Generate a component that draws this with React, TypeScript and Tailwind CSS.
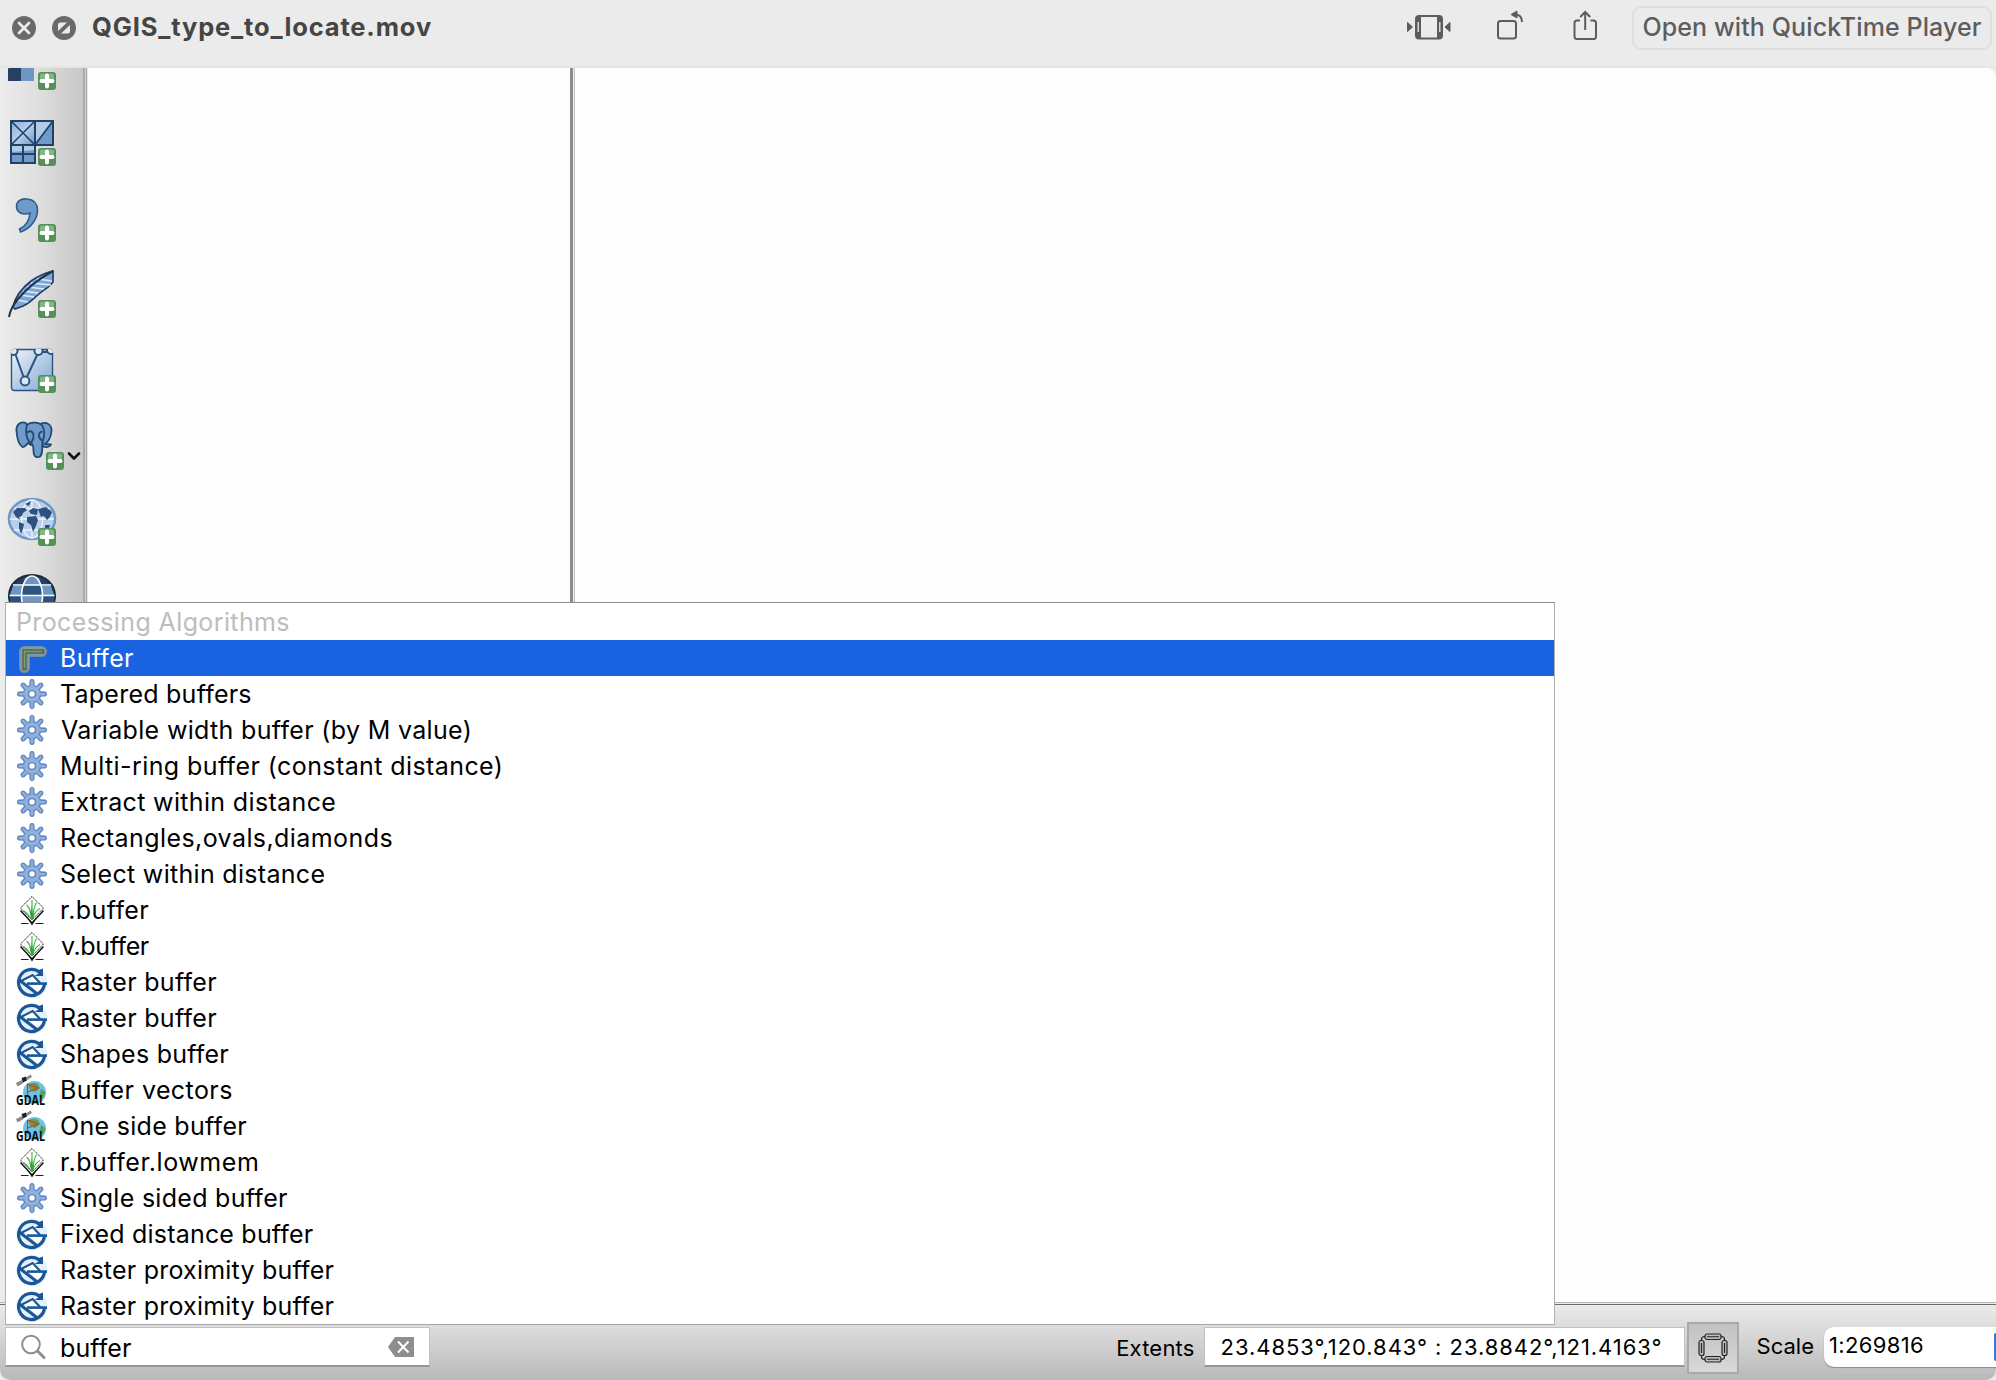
import type { ReactNode } from 'react';

type IconName = 'buffer' | 'gear' | 'grass' | 'saga' | 'gdal';

const results: { icon: IconName; label: string; text: string }[] = [
  { icon: 'buffer', label: 'Buffer', text: 'tracking-[0.3px]' },
  { icon: 'gear', label: 'Tapered buffers', text: 'tracking-[0.24px]' },
  { icon: 'gear', label: 'Variable width buffer (by M value)', text: 'tracking-[0.335px] ml-px' },
  { icon: 'gear', label: 'Multi-ring buffer (constant distance)', text: 'tracking-[0.41px]' },
  { icon: 'gear', label: 'Extract within distance', text: 'tracking-[0.35px]' },
  { icon: 'gear', label: 'Rectangles,ovals,diamonds', text: 'tracking-[0.42px]' },
  { icon: 'gear', label: 'Select within distance', text: 'tracking-[0.304px]' },
  { icon: 'grass', label: 'r.buffer', text: 'tracking-[0.4px]' },
  { icon: 'grass', label: 'v.buffer', text: 'tracking-[-0.4px] ml-px' },
  { icon: 'saga', label: 'Raster buffer', text: 'tracking-[0.3px]' },
  { icon: 'saga', label: 'Raster buffer', text: 'tracking-[0.3px]' },
  { icon: 'saga', label: 'Shapes buffer', text: 'tracking-[0.239px]' },
  { icon: 'gdal', label: 'Buffer vectors', text: 'tracking-[0.42px]' },
  { icon: 'gdal', label: 'One side buffer', text: 'tracking-[0.299px]' },
  { icon: 'grass', label: 'r.buffer.lowmem', text: 'tracking-[0.56px]' },
  { icon: 'gear', label: 'Single sided buffer', text: 'tracking-[0.289px]' },
  { icon: 'saga', label: 'Fixed distance buffer', text: 'tracking-[0.2px]' },
  { icon: 'saga', label: 'Raster proximity buffer', text: 'tracking-[0.22px]' },
  { icon: 'saga', label: 'Raster proximity buffer', text: 'tracking-[0.22px]' },
];

function BufferIcon() {
  return (
    <g fill="none" strokeLinejoin="round" strokeLinecap="round">
      <path d="M10.5 27.5V11.5H27.5" stroke="#6f8f9f" strokeWidth="11" />
      <path d="M10.5 27.5V11.5H27.5" stroke="#8496a0" strokeWidth="9" />
      <path d="M10.5 28V11.5H28" stroke="#4c6b52" strokeWidth="4.4" strokeLinejoin="miter" strokeLinecap="square" />
      <path d="M10.5 28V11.5H28" stroke="#7d9f78" strokeWidth="1.6" strokeLinejoin="miter" strokeLinecap="butt" />
    </g>
  );
}

function GearIcon() {
  const angles = [0, 45, 90, 135, 180, 225, 270, 315];
  return (
    <g>
      {angles.map((a) => (
        <path
          key={a}
          d="M16 10L16.2 5Q16.3 3.600 18 3.600Q19.700 3.600 19.800 5L20 10Z"
          transform={`rotate(${a} 18 18)`}
          fill="#8fb0dc"
          stroke="#5d85bd"
          strokeWidth="1.4"
        />
      ))}
      <circle cx="18" cy="18" r="8.6" fill="#8fb0dc" stroke="#5d85bd" strokeWidth="1.2" />
      {angles.map((a) => (
        <rect key={a} x="16.8" y="7" width="2.4" height="4" transform={`rotate(${a} 18 18)`} fill="#8fb0dc" />
      ))}
      <circle cx="18" cy="18" r="3.4" fill="#fff" stroke="#5d85bd" strokeWidth="1.4" />
    </g>
  );
}

function GrassIcon() {
  return (
    <g>
      <path d="M18 4.5L29.5 16L18 28L6.5 16Z" fill="#fff" stroke="#222" strokeWidth="1" strokeDasharray="1.6 0.7" />
      <path d="M6.5 18.5L18 31L29.5 18.5" fill="none" stroke="#111" strokeWidth="1.5" />
      <path d="M13.5 26.5L18 31L22.500 26.500L18 33.500Z" fill="#111" />
      <path d="M7 31.500H14.500M21.500 31.500H29.500" stroke="#222" strokeWidth="1.2" />
      <g fill="none" stroke="#3cb53f" strokeWidth="1.100">
        <path d="M18 26L18 8" />
        <path d="M17.500 26C17 20 15 15 12.500 13" />
        <path d="M18.500 26C19 20 20 15 22.500 10.500" />
        <path d="M17.500 27C15 23 12 20 9.500 18.500" />
        <path d="M18.500 27C20 22 23 18 26 16.500" />
      </g>
      <path d="M15.500 19L18 28L20.500 19L18.600 22L17.800 13L17 21Z" fill="#2c9c33" />
    </g>
  );
}

function SagaIcon() {
  return (
    <g fill="none">
      <circle cx="18" cy="18.500" r="15.500" fill="#e1f0fb" />
      <path d="M10 16L18.500 11.500L24 18.500H13Z" fill="#fff" />
      <path d="M17 21H29.500C28 25 26 28 23 29.500Z" fill="#fff" />
      <g stroke="#1b5796">
        <path d="M25.500 8.200A13 13 0 1 0 30.500 19.500" strokeWidth="3.200" />
        <path d="M6 17.500L18.700 11L26.500 19.500" strokeWidth="2.200" />
        <path d="M13 19.600H33" strokeWidth="2.600" />
        <path d="M4.500 15.500L23.500 30" strokeWidth="3" />
      </g>
      <path d="M19.500 4.200L25 6L29 4.500V12H20.500L24.500 9.500Z" fill="#1b5796" />
    </g>
  );
}

function GdalIcon() {
  return (
    <g>
      <circle cx="20.500" cy="20.500" r="11.500" fill="#6cc3e6" />
      <path d="M14 13Q19 9 24 12L26 16L21 20L16 18Z" fill="#6c9a48" />
      <path d="M27 17L31.500 20L29 27L25 24Z" fill="#58a355" />
      <path d="M13.500 24V12M13.500 12L24 16L14 20" fill="none" stroke="#c43b2e" strokeWidth="1.100" />
      <path d="M2 11L8 8L9.500 11L3.500 14.500ZM12 5.500L16.500 2.500L18 5L13 8Z" fill="#8a8a8a" />
      <path d="M7.500 6L12 4.500L13 8.500L9 10.500Z" fill="#222" />
      <text
        x="2"
        y="32.800"
        textLength="29"
        lengthAdjust="spacingAndGlyphs"
        fontFamily="Open Sans, sans-serif"
        fontWeight="700"
        fontSize="14.800"
        fill="#0a0a0a"
      >
        GDAL
      </text>
    </g>
  );
}

const icons: Record<IconName, () => ReactNode> = {
  buffer: BufferIcon,
  gear: GearIcon,
  grass: GrassIcon,
  saga: SagaIcon,
  gdal: GdalIcon,
};

function Plus({ x, y }: { x: number; y: number }) {
  return (
    <g transform={`translate(${x} ${y})`}>
      <rect width="18" height="18" rx="3" fill="#55905a" />
      <rect x="2" y="1.500" width="14" height="7.500" rx="1.500" fill="#86b489" />
      <path d="M9 3.500V14.500M3.500 9H14.500" stroke="#fff" strokeWidth="4" strokeLinecap="round" />
    </g>
  );
}

function Slot({ top, height = 76, children }: { top: number; height?: number; children: ReactNode }) {
  return (
    <svg width="83" height={height} viewBox={`0 ${top} 83 ${height}`} className="block shrink-0">
      {children}
    </svg>
  );
}

function Toolbar() {
  return (
    <aside className="flex w-[88px] shrink-0 bg-linear-to-r from-[#ececec] via-[#dcdcdc] to-[#c4c4c4]">
      <div className="flex w-[83px] flex-col">
        <Slot top={68} height={38}>
          <rect x="8" y="68" width="13" height="13" fill="#27405f" />
          <rect x="21" y="68" width="13" height="13" fill="#6d96c4" />
          <Plus x={38} y={72} />
        </Slot>
        <Slot top={106}>
          <defs>
            <linearGradient id="cell" x1="0" y1="0" x2="1" y2="1">
              <stop offset="0" stopColor="#86aad4" />
              <stop offset=".5" stopColor="#b9d0ea" />
              <stop offset="1" stopColor="#6d96c6" />
            </linearGradient>
          </defs>
          <rect x="11" y="121" width="24" height="24" fill="url(#cell)" />
          <rect x="35" y="121" width="18" height="24" fill="#709ac9" />
          <path d="M35 121H52L35 143Z" fill="#b4cbe6" />
          <rect x="11" y="145" width="24" height="18" fill="#709ac9" />
          <path d="M11 145H35V150L11 152Z" fill="#b4cbe6" />
          <g fill="none" stroke="#1f4269" strokeWidth="2">
            <path d="M11 121H53V145H11ZM35 121V163H11V121M11 154H35M23 145V163" />
            <path d="M11 121L35 145M35 121L11 145M53 121L35 145" strokeWidth="1.600" />
          </g>
          <Plus x={38} y={148} />
        </Slot>
        <Slot top={182}>
          <path
            d="M27 199C20.500 198 16.500 202 16.500 206.500C16.500 211 20 214 24.500 214C27 214 29 213.500 30 213C29.500 220 26 226 19.500 229L20.500 232C31 228.500 37.500 219 37.500 210C37.500 204 34 199.500 27 199Z"
            fill="#6f99c8"
            stroke="#2d5d8e"
            strokeWidth="1.600"
          />
          <Plus x={38} y={224} />
        </Slot>
        <Slot top={258}>
          <path
            d="M53 271C45 273 38 276 31 281C22 288 15 297 13 307L15 309L23 306C30 303 34 298 39 294C45 289 51 286 53 282Z"
            fill="#7fa8d6"
            stroke="#1f3d60"
            strokeWidth="1.600"
          />
          <path
            d="M20 295L34 297M23 291L38 293M27 287L44 289M31 283L51 285M37 279L52 281M17 300L28 302"
            stroke="#dceafa"
            strokeWidth="1.600"
          />
          <path d="M53 271C42 277 27 288 18 299C13 305 10 311 9 317" fill="none" stroke="#1f3450" strokeWidth="2" />
          <Plus x={38} y={300} />
        </Slot>
        <Slot top={334}>
          <defs>
            <linearGradient id="sheet" x1="0" y1="0" x2="1" y2="1">
              <stop offset="0" stopColor="#eef3f8" />
              <stop offset="1" stopColor="#7fa7d4" />
            </linearGradient>
            <clipPath id="sheetClip">
              <rect x="11" y="349" width="42" height="42" rx="3" />
            </clipPath>
          </defs>
          <rect x="11.500" y="349.500" width="41" height="41" rx="3" fill="url(#sheet)" stroke="#2b5584" strokeWidth="1.400" />
          <g clipPath="url(#sheetClip)" fill="#dde8f4" stroke="#2b5584" strokeWidth="2">
            <path d="M15 353L25 381L38 353M39 352L51 352" fill="none" />
            <circle cx="13.500" cy="351" r="4" />
            <circle cx="25" cy="381" r="4.400" />
            <circle cx="38.500" cy="351" r="4" />
            <circle cx="51" cy="350" r="4" />
          </g>
          <Plus x={38} y={375} />
        </Slot>
        <Slot top={410}>
          <g fill="#6f9ac9" stroke="#234a75" strokeWidth="1.800" strokeLinejoin="round">
            <path d="M26 423C20 421 16 425 16.500 431C17 438 19 445 22.500 447C25 447.500 26 445 28 443L31 445L33 443Z" />
            <path d="M40 424C47 421 52 425 51.500 431C51 437 48 442 45 444L51 444.500C50 447 46 448 43 446.500Z" />
            <path d="M27 425C30 421.500 41 421.500 43 427C45 432 44 438 42.500 442C42 448 43 456 39 457C35 458 33.500 455 33.500 451C33.500 447 33 444 31 443C26 440 25 430 27 425Z" />
            <path d="M27 433C29 430 33 431 33.500 435C34 439 32 441 31 443" fill="none" />
            <path d="M42.500 432C40 431 38.500 434 39 436.500C39.500 439 41 440 43 441" fill="none" />
          </g>
          <Plus x={46} y={452} />
          <path d="M69 453.500L74 458.500L79 453.500" fill="none" stroke="#111" strokeWidth="2.600" strokeLinecap="round" strokeLinejoin="round" />
        </Slot>
        <Slot top={486}>
          <ellipse cx="32" cy="519" rx="23" ry="20" fill="#b7cfea" stroke="#6d97c6" strokeWidth="2.600" />
          <g fill="none" stroke="#eef5fd" strokeWidth="1.300">
            <ellipse cx="32" cy="519" rx="10.500" ry="19" />
            <path d="M32 500V538M10 519H54M14 508.500H50M14 530H50" />
          </g>
          <g fill="#2d527f">
            <path d="M13 512L17 508L25 508L27 510L23 513L22 516L19 517L20 520L16 517Z" />
            <path d="M19 522L24 524L23 529L21 534L19 528Z" />
            <path d="M29 511L33 508L38 509L37 515L31 514Z" />
            <path d="M27 517L36 516L38 520L36 526L33 532L31 525L27 522Z" />
            <path d="M38 509L46 507L52 512L50 517L47 520L44 516L41 517Z" />
            <path d="M45 525L50 525L49 529L45 529Z" />
            <path d="M25 504L31 501L29 506Z" />
          </g>
          <Plus x={38} y={528} />
        </Slot>
        <Slot top={562} height={60}>
          <ellipse cx="32" cy="596" rx="23" ry="21" fill="#27405f" stroke="#1c2c40" strokeWidth="2.200" />
          <path d="M13 586H22V595H10ZM42 586H51L54 595H42ZM25 578L32 576L39 578L41 585H23Z" fill="#6d96c4" />
          <path d="M22 585H42V595H22Z" fill="#2f547f" />
          <path d="M22 596H42V606H22Z" fill="#6d96c4" />
          <path d="M10 596H21V606H10ZM43 596H54V606H43Z" fill="#2d507c" />
          <g fill="none" stroke="#fff" strokeWidth="1.600">
            <ellipse cx="32" cy="596" rx="10.500" ry="20" />
            <path d="M13 585H51M9.500 595.500H54.500" />
          </g>
        </Slot>
      </div>
      <div className="w-[2px] bg-[#a9a9a9]" />
      <div className="w-[1px] bg-[#d0d0d0]" />
      <div className="w-[1px] bg-[#a9a9a9]" />
      <div className="w-[1px] bg-[#e6e6e6]" />
    </aside>
  );
}

function TitleBar() {
  return (
    <header className="flex h-[68px] shrink-0 items-start border-b-2 border-[#e6e6e6] bg-[#ebebeb] pr-[4px] pl-[12px]">
      <div className="flex h-[56px] flex-1 items-center">
        <svg width="64" height="24" viewBox="0 0 64 24" className="block">
          <circle cx="12" cy="12" r="12" fill="#6a6a6a" />
          <path d="M7 7L17 17M17 7L7 17" stroke="#ebebeb" strokeWidth="2.800" strokeLinecap="round" />
          <circle cx="52" cy="12" r="12" fill="#6a6a6a" />
          <path d="M46 15V9Q46 6.500 48.500 6.500H55Z" fill="#ebebeb" />
          <path d="M58 9V15Q58 17.500 55.500 17.500H49Z" fill="#ebebeb" />
          <path d="M46.500 17.500L57.500 6.500" stroke="#6a6a6a" strokeWidth="2" />
        </svg>
        <h1 className="ml-[16px] pb-[2px] text-[25.5px] leading-[36px] font-bold tracking-[0.85px] whitespace-nowrap text-[#454545]">
          QGIS_type_to_locate.mov
        </h1>
      </div>
      <svg width="196" height="50" viewBox="1405 0 196 50" className="mr-[31px] block" fill="none" stroke="#5c5c5c">
        <path d="M1407.500 22.500L1412.500 27L1407.500 31.500ZM1450 22.500L1445 27L1450 31.500Z" fill="#5c5c5c" strokeWidth="1" />
        <rect x="1416" y="16" width="26" height="22.500" rx="3" strokeWidth="2" />
        <path d="M1418.500 16V38M1439.500 16V38" strokeWidth="5" />
        <path d="M1418.200 22V32M1439.800 22V32" stroke="#ebebeb" strokeWidth="1.300" />
        <rect x="1498" y="21" width="18" height="17.500" rx="2.500" strokeWidth="2" />
        <path d="M1514 14.500C1519.500 14 1522 17 1522 22" strokeWidth="2" />
        <path d="M1511 14.500L1517 11V18Z" fill="#5c5c5c" strokeWidth="1" />
        <path d="M1580 20.500H1577Q1574.500 20.500 1574.500 23V36.500Q1574.500 39 1577 39H1593.500Q1596 39 1596 36.500V23Q1596 20.500 1593.500 20.500H1590.500" strokeWidth="2" />
        <path d="M1585.200 30V12.500M1580.200 17L1585.200 12L1590.200 17" strokeWidth="2" />
      </svg>
      <button className="mt-[6px] flex h-[44px] w-[360px] items-center justify-center rounded-[9px] border-2 border-[#dfdfdf] text-[25px] font-medium tracking-[0.11px] whitespace-nowrap text-[#5d5d5d]">
        Open with QuickTime Player
      </button>
    </header>
  );
}

function LocatorPopup() {
  return (
    <div className="absolute top-[602px] left-[5px] w-[1550px] border border-t-[#8d8d8d] border-r-[#b0b0b0] border-b-[#a5a5a5] border-l-[#b0b0b0] bg-white">
      <div className="h-[37px] pl-[10px] text-[25px] leading-[38px] tracking-[0.38px] text-[#bdbdbd]">Processing Algorithms</div>
      <ul>
        {results.map((r, i) => {
          const Icon = icons[r.icon];
          return (
            <li key={i} className={i === 0 ? 'flex h-[36px] bg-[#1a63e0] pl-[8px] text-white' : 'flex h-[36px] pl-[8px] text-black'}>
              <svg width="36" height="36" viewBox="0 0 36 36" className="mr-[10px] block shrink-0 overflow-visible">
                <Icon />
              </svg>
              <span className={`${r.text} text-[25px] leading-[36px] whitespace-nowrap`}>{r.label}</span>
            </li>
          );
        })}
      </ul>
    </div>
  );
}

function StatusBar() {
  return (
    <footer className="flex h-[76px] shrink-0 items-start border-t border-[#6b6b6b] bg-linear-to-b from-[#ebebeb] to-[#b9b9b9] pt-[22px] pl-[5px]">
      <div className="flex h-[40px] w-[425px] items-center border border-b-2 border-[#c2c2c2] border-b-[#969696] bg-white pl-[15px]">
        <svg width="26" height="26" viewBox="0 0 26 26" className="block" fill="none" stroke="#8e8e8e">
          <circle cx="10" cy="10.500" r="8.800" strokeWidth="2" />
          <path d="M16.500 17L23 23.500" strokeWidth="3" strokeLinecap="round" />
        </svg>
        <span className="ml-[13px] flex-1 pt-[2px] text-[25px] leading-[36px] tracking-[0.1px] text-black">buffer</span>
        <svg width="26" height="20" viewBox="0 0 26 20" className="mr-[15px] block">
          <path d="M7 0H26V20H7L0 10Z" fill="#8e8e8e" />
          <path d="M10 4.500L20.500 15.500M20.500 4.500L10 15.500" stroke="#fff" strokeWidth="2" />
        </svg>
      </div>
      <span className="ml-auto pt-px text-[22px] leading-[40px] tracking-[0.2px] text-black">Extents</span>
      <div className="ml-[9px] flex h-[40px] w-[481px] items-center border border-b-2 border-[#c2c2c2] border-b-[#969696] bg-white pt-px pl-[16px] text-[22px] tracking-[0.94px] whitespace-nowrap text-black">
        23.4853°,120.843° : 23.8842°,121.4163°
      </div>
      <div className="-mt-[5px] ml-[2px] flex h-[52px] w-[52px] items-center justify-center border-2 border-[#a9a9a9] bg-linear-to-b from-[#c2c2c2] to-[#d8d8d8]">
        <svg width="30" height="30" viewBox="0 0 30 30" className="block" fill="#bdbdbd" stroke="#222" strokeWidth="1.200">
          <rect x="3.500" y="3.500" width="23" height="23" rx="3" fill="none" />
          <rect x="7" y="1" width="16" height="5.500" rx="2" />
          <rect x="7" y="23.500" width="16" height="5.500" rx="2" />
          <rect x="1" y="7.500" width="5" height="15" rx="2" />
          <rect x="24" y="7.500" width="5" height="15" rx="2" />
          <path d="M9 3.750H21M9 26.250H21M3.500 10V20M26.500 10V20" />
        </svg>
      </div>
      <span className="ml-[18px] text-[22px] leading-[39px] text-black">Scale</span>
      <div className="ml-[10px] flex h-[40px] w-[172px] shrink-0 items-stretch overflow-hidden rounded-l-[10px] bg-white pl-[5px] shadow-[0_1px_1px_#8a8a8a]">
        <span className="flex-1 text-[22px] leading-[37px] tracking-[0.35px] text-black">1:269816</span>
        <span className="my-[6px] w-[2px] rounded-l-[2px] bg-[#2f7de0]" />
      </div>
    </footer>
  );
}

export default function App() {
  return (
    <div className="relative flex h-[1380px] w-[1996px] flex-col overflow-hidden bg-[#ebebeb] font-['Inter',sans-serif]">
      <TitleBar />
      <main className="flex min-h-0 flex-1 flex-col overflow-hidden rounded-[10px] bg-white">
        <div className="flex min-h-0 flex-1 border-b border-[#b4b4b4]">
          <Toolbar />
          <section className="w-[482px] bg-[#fefefe]" />
          <div className="flex w-[5px]">
            <div className="w-[3px] bg-[#8c8c8c]" />
            <div className="w-[1px] bg-[#f0f0f0]" />
            <div className="w-[1px] bg-[#c0c0c0]" />
          </div>
          <section className="flex-1 bg-[#fefefe]" />
        </div>
        <div className="h-px shrink-0 bg-[#eeeeee]" />
        <StatusBar />
      </main>
      <LocatorPopup />
    </div>
  );
}
